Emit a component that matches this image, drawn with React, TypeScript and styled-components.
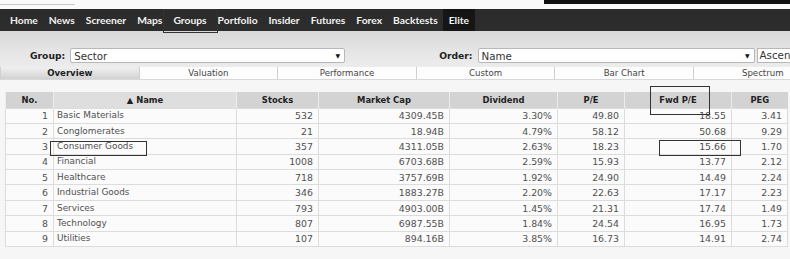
import { createGlobalStyle, styled } from "styled-components";

const GlobalStyle = createGlobalStyle`
  html, body {
    margin: 0;
    padding: 0;
    background: #f6f6f6;
    width: 790px;
    height: 259px;
    overflow: hidden;
  }
  * { box-sizing: border-box; }
`;

const Page = styled.div`
  position: relative;
  width: 790px;
  height: 259px;
  overflow: hidden;
  font-family: "DejaVu Sans", Verdana, sans-serif;
  color: #444;
`;

const TopStrip = styled.div`
  height: 9px;
  background: #fafafa;
  display: flex;
  justify-content: space-between;
`;

const TopLine = styled.div`
  width: 75px;
  height: 5px;
  border-bottom: 1px solid #c8c8c8;
`;

const TopBlack = styled.div`
  width: 246px;
  height: 4px;
  background: #111;
`;

const Nav = styled.nav`
  height: 22px;
  background: #2c2c2c;
  display: flex;
  align-items: center;
  padding-left: 4.5px;
  box-shadow: 0 1px 0 #5a5a5a;
`;

const NavItem = styled.div<{ $dark?: boolean }>`
  height: 100%;
  display: flex;
  align-items: center;
  padding: 0 5.5px;
  font-family: Lato, "Open Sans", sans-serif;
  font-weight: 700;
  font-size: 10.3px;
  color: #f2f2f2;
  background: ${(p) => (p.$dark ? "#151515" : "transparent")};
`;

const Controls = styled.div`
  height: 36px;
  background: linear-gradient(#d8d8d8, #e6e6e6 60%, #ececec);
  display: flex;
  align-items: flex-end;
  padding: 0 0 4px 30px;
`;

const Label = styled.span`
  font-weight: 700;
  font-size: 9.2px;
  color: #222;
  margin-right: 5px;
  line-height: 15px;
`;

const Select = styled.div<{ $w: number }>`
  width: ${(p) => p.$w}px;
  flex-shrink: 0;
  height: 15px;
  background: #fff;
  border: 1px solid #b8b8b8;
  border-radius: 2px;
  display: flex;
  align-items: center;
  justify-content: space-between;
  padding: 0 4px 0 3px;
  font-size: 10.3px;
  color: #333;
  &::after {
    content: "▼";
    font-size: 6px;
    color: #111;
  }
`;

const AscBox = styled.div`
  margin-left: 2px;
  height: 15px;
  flex: 1;
  background: #fff;
  border: 1px solid #b8b8b8;
  border-right: none;
  font-size: 10.3px;
  padding-left: 2px;
  line-height: 13px;
  color: #333;
  white-space: nowrap;
`;

const Spacer = styled.div<{ $w: number }>`
  width: ${(p) => p.$w}px;
  flex-shrink: 0;
`;

const Tabs = styled.div`
  display: flex;
  height: 13px;
  background: #fff;
  border-bottom: 1px solid #d8d8d8;
`;

const Tab = styled.div<{ $active?: boolean }>`
  width: 138.6px;
  flex-shrink: 0;
  text-align: center;
  font-size: 8.6px;
  line-height: 12px;
  color: ${(p) => (p.$active ? "#222" : "#444")};
  font-weight: ${(p) => (p.$active ? 700 : 400)};
  background: ${(p) =>
    p.$active ? "linear-gradient(#f0f0f0, #d2d2d2)" : "#fdfdfd"};
  border-left: 1px solid #d0d0d0;
`;

const TableWrap = styled.div`
  padding: 12px 3px 0 5px;
`;

const Table = styled.table`
  border-collapse: collapse;
  width: 782px;
  table-layout: fixed;
`;

const Th = styled.th<{ $light?: boolean }>`
  height: 16px;
  padding: 0;
  font-size: 8.4px;
  font-weight: 700;
  color: #222;
  background: ${(p) => (p.$light ? "#dedede" : "#d3d3d3")};
  border-left: 1px solid #ececec;
`;

const Td = styled.td<{ $left?: boolean }>`
  height: 15.4px;
  padding: 0 5px 0 3px;
  text-align: ${(p) => (p.$left ? "left" : "right")};
  font-size: ${(p) => (p.$left ? "8.9px" : "9.4px")};
  border: 1px solid #dcdcdc;
  background: #fbfbfb;
  color: #505050;
  white-space: nowrap;
  line-height: 13px;
`;

const Mark = styled.div`
  position: absolute;
  border: 1.5px solid #333;
  pointer-events: none;
`;

const cols = [48, 183, 82, 131, 108, 67, 107, 56];

const rows = [
  [1, "Basic Materials", "532", "4309.45B", "3.30%", "49.80", "18.55", "3.41"],
  [2, "Conglomerates", "21", "18.94B", "4.79%", "58.12", "50.68", "9.29"],
  [3, "Consumer Goods", "357", "4311.05B", "2.63%", "18.23", "15.66", "1.70"],
  [4, "Financial", "1008", "6703.68B", "2.59%", "15.93", "13.77", "2.12"],
  [5, "Healthcare", "718", "3757.69B", "1.92%", "24.90", "14.49", "2.24"],
  [6, "Industrial Goods", "346", "1883.27B", "2.20%", "22.63", "17.17", "2.23"],
  [7, "Services", "793", "4903.00B", "1.45%", "21.31", "17.74", "1.49"],
  [8, "Technology", "807", "6987.55B", "1.84%", "24.54", "16.95", "1.73"],
  [9, "Utilities", "107", "894.16B", "3.85%", "16.73", "14.91", "2.74"],
];

const navItems = [
  "Home", "News", "Screener", "Maps", "Groups", "Portfolio",
  "Insider", "Futures", "Forex", "Backtests",
];

const tabs = ["Overview", "Valuation", "Performance", "Custom", "Bar Chart", "Spectrum"];

export default function App() {
  return (
    <Page>
      <GlobalStyle />
      <TopStrip>
        <TopLine />
        <TopBlack />
      </TopStrip>
      <Nav>
        {navItems.map((n) => (
          <NavItem key={n}>{n}</NavItem>
        ))}
        <NavItem $dark>Elite</NavItem>
      </Nav>
      <Controls>
        <Label>Group:</Label>
        <Select $w={275}>Sector</Select>
        <Spacer $w={94} />
        <Label>Order:</Label>
        <Select $w={277}>Name</Select>
        <AscBox>Ascen</AscBox>
      </Controls>
      <Tabs>
        {tabs.map((t, i) => (
          <Tab key={t} $active={i === 0}>
            {t}
          </Tab>
        ))}
      </Tabs>
      <TableWrap>
        <Table>
          <colgroup>
            {cols.map((w, i) => (
              <col key={i} style={{ width: w }} />
            ))}
          </colgroup>
          <thead>
            <tr>
              <Th>No.</Th>
              <Th $light>▲ Name</Th>
              <Th>Stocks</Th>
              <Th>Market Cap</Th>
              <Th>Dividend</Th>
              <Th>P/E</Th>
              <Th>Fwd P/E</Th>
              <Th>PEG</Th>
            </tr>
          </thead>
          <tbody>
            {rows.map((r) => (
              <tr key={r[0]}>
                {r.map((c, i) => (
                  <Td key={i} $left={i === 1}>
                    {c}
                  </Td>
                ))}
              </tr>
            ))}
          </tbody>
        </Table>
      </TableWrap>
      <Mark style={{ left: 163, top: 9, width: 55, height: 24 }} />
      <Mark style={{ left: 650, top: 86, width: 60, height: 29 }} />
      <Mark style={{ left: 50, top: 141, width: 97, height: 15 }} />
      <Mark style={{ left: 659, top: 140, width: 82, height: 16 }} />
    </Page>
  );
}
